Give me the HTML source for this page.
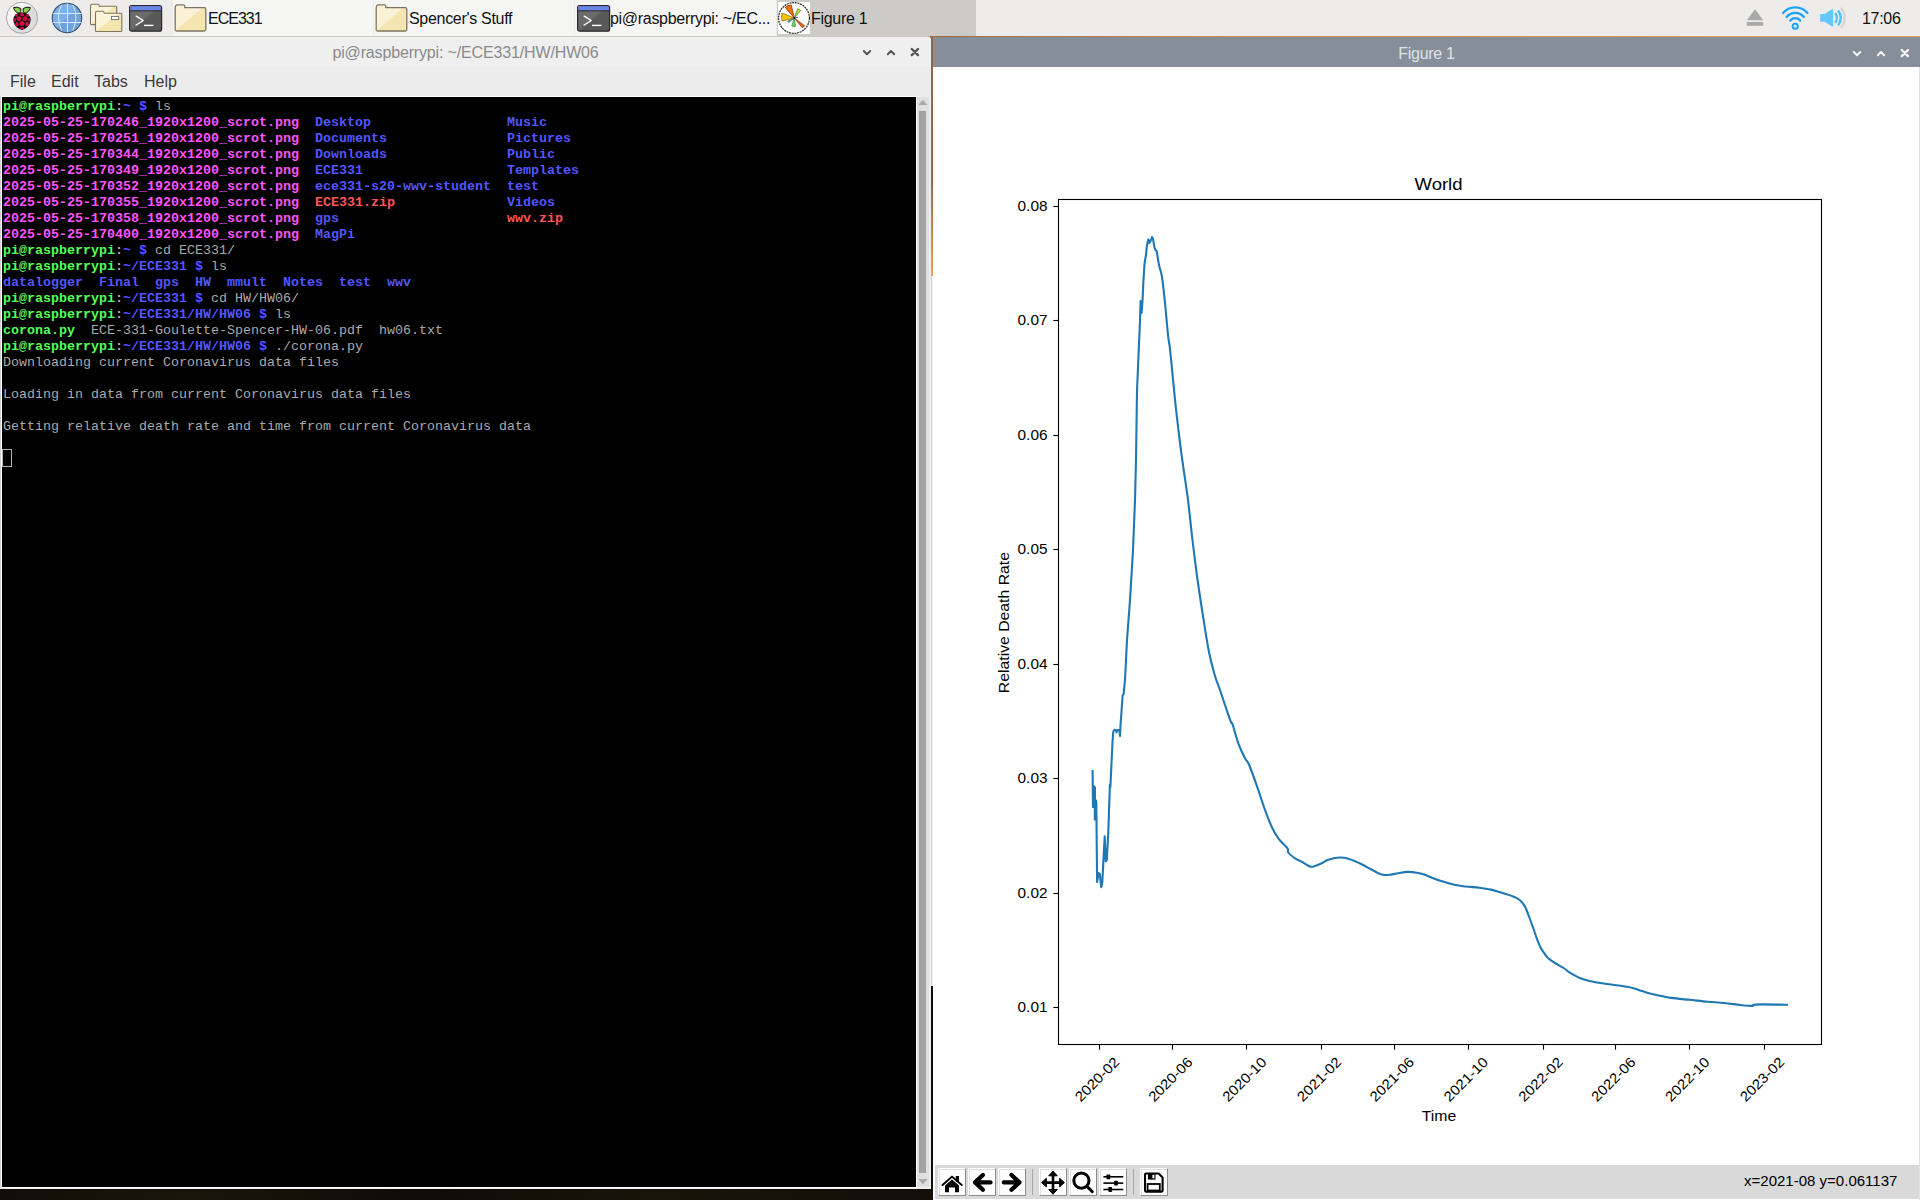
<!DOCTYPE html>
<html><head><meta charset="utf-8">
<style>
*{margin:0;padding:0;box-sizing:border-box}
html,body{width:1920px;height:1200px;overflow:hidden;background:#1a130c;font-family:"Liberation Sans",sans-serif;position:relative}
.abs{position:absolute}
.r{position:absolute}
#taskbar{position:absolute;left:0;top:0;width:1920px;height:36px;background:#edecea}
.tbtn{position:absolute;top:0;height:36px;background:#f5f5f3}
.tbtn.act{background:#cdcbc7;border-radius:0 0 0 0}
.ttext{position:absolute;top:1px;height:36px;line-height:36px;font-size:16px;color:#111;white-space:nowrap;letter-spacing:-0.3px}
#wall{position:absolute;left:0;top:1188px;width:933px;height:12px;background:linear-gradient(90deg,#120d07,#1b140b 20%,#100b06 45%,#1a130a 70%,#130e08)}
#termwin{position:absolute;left:0;top:36px;width:931px;height:1153px;background:#efefef}
#termtitle{position:absolute;left:0;top:36px;width:931px;height:30px;background:#efefef;border-top:1px solid #c9c9c9;color:#8a8a8a;font-size:16px;text-align:center;line-height:30px;padding-top:1px;letter-spacing:-0.15px}
#menubar{position:absolute;left:0;top:66px;width:931px;height:30px;background:#ececec}
.mi{position:absolute;top:67px;height:30px;line-height:30px;font-size:16px;color:#3a3a3a}
#screen{position:absolute;left:2px;top:97px;width:914px;height:1090px;background:#000;font-family:"Liberation Mono",monospace;font-size:13.333px;line-height:16px;color:#aaaaaa;white-space:pre;padding:2px 0 0 1px;overflow:hidden}
#screen .g{color:#55ff55;font-weight:bold}
#screen .b{color:#5555ff;font-weight:bold}
#screen .m{color:#ff55ff;font-weight:bold}
#screen .r{color:#ff5555;font-weight:bold;position:static}
#screen .w{color:#aaaaaa;font-weight:bold}
#fig{position:absolute;left:933px;top:37px;width:987px;height:1163px;background:#fff}
#figtitle{position:absolute;left:933px;top:37px;width:987px;height:30px;background:#868f99;color:#dfe3e6;font-size:16px;text-align:center;line-height:30px;padding-top:2px;letter-spacing:-0.3px}
#toolbar{position:absolute;left:935px;top:1165px;width:984px;height:34px;background:#d9d9d9}
.tb{position:absolute;top:1168px;width:28px;height:28px;background:#fff;border-top:1px solid #fff;border-left:1px solid #fff;border-right:1px solid #8c8c8c;border-bottom:1px solid #8c8c8c;box-shadow:inset 1px 1px 0 #dedede}
.sep{position:absolute;top:1169px;width:1px;height:26px;background:#a8a8a8}
#status{position:absolute;left:1744px;transform-origin:0 50%;transform:scaleX(1.073);top:1164px;height:34px;line-height:34px;font-size:14px;color:#000;white-space:nowrap}
svg text.tk{font-family:"Liberation Sans",sans-serif;font-size:14px;fill:#000}
svg text.ttl{font-family:"Liberation Sans",sans-serif;font-size:17px;fill:#000}
</style></head><body>
<div id="wall"></div>
<div id="taskbar"></div>
<svg class="abs" style="left:4px;top:0px" width="40" height="36" viewBox="4 0 40 36">
<defs><linearGradient id="rg" x1="0" y1="0" x2="1" y2="1"><stop offset="0.45" stop-color="#f4f4f4"/><stop offset="0.55" stop-color="#dcdcdc"/></linearGradient></defs>
<circle cx="22" cy="17.8" r="15.6" fill="url(#rg)" stroke="#a5a5a5" stroke-width="1"/>
<path d="M13.6,7.6 Q17,6.2 20.8,8.5 Q21.5,11.5 19.5,13.3 Q15,12.8 13.6,7.6 Z" fill="#8ccf4d" stroke="#111" stroke-width="1"/>
<path d="M30.4,7.6 Q27,6.2 23.2,8.5 Q22.5,11.5 24.5,13.3 Q29,12.8 30.4,7.6 Z" fill="#8ccf4d" stroke="#111" stroke-width="1"/>
<path d="M22,12.2 Q27.5,12.6 29.6,16 Q31.5,19 30,23 Q28.8,27.5 22,30 Q15.2,27.5 14,23 Q12.5,19 14.4,16 Q16.5,12.6 22,12.2 Z" fill="#111"/>
<g fill="#d9073f">
<ellipse cx="22" cy="14.6" rx="2.3" ry="1.6"/>
<circle cx="19" cy="18.7" r="2.4"/><circle cx="25" cy="18.7" r="2.4"/>
<ellipse cx="14.8" cy="19.8" rx="1.1" ry="1.9"/><ellipse cx="29.2" cy="19.8" rx="1.1" ry="1.9"/>
<circle cx="22" cy="23.6" r="2.5"/>
<ellipse cx="16.9" cy="24.2" rx="1.8" ry="2.1"/><ellipse cx="27.1" cy="24.2" rx="1.8" ry="2.1"/>
<ellipse cx="22" cy="28.3" rx="2.2" ry="1.2"/>
<ellipse cx="16.5" cy="15.5" rx="1.5" ry="1.2"/><ellipse cx="27.5" cy="15.5" rx="1.5" ry="1.2"/>
</g>
</svg>
<svg class="abs" style="left:48px;top:0px" width="40" height="36" viewBox="48 0 40 36">
<defs><linearGradient id="gg" x1="0" y1="0" x2="1" y2="1"><stop offset="0.5" stop-color="#7cb0eb"/><stop offset="0.5" stop-color="#73a2d8"/></linearGradient></defs>
<circle cx="67" cy="17.9" r="14.7" fill="url(#gg)" stroke="#3a5272" stroke-width="1.1"/>
<g stroke="#d8e8fa" stroke-width="1" fill="none">
<line x1="67.5" y1="3.6" x2="67.5" y2="32.2"/>
<line x1="53" y1="13.5" x2="81.5" y2="13.5"/>
<line x1="53" y1="22.5" x2="81.5" y2="22.5"/>
<path d="M61.5,5.2 Q57.8,12 58.5,18 Q58.8,24 61.5,30.5"/>
<path d="M72.8,5.2 Q76.6,12 75.9,18 Q75.6,24 72.8,30.5"/>
</g>
</svg>
<svg class="abs" style="left:86px;top:0px" width="40" height="36" viewBox="86 0 40 36">
<defs><linearGradient id="f2" x1="0" y1="0" x2="1" y2="1"><stop offset="0.48" stop-color="#fbf4d8"/><stop offset="0.52" stop-color="#f4e4ae"/></linearGradient></defs>
<path d="M90.5,6 Q90.5,4.3 92,4.3 L98,4.3 Q99,4.3 99.2,6.3 L115.8,6.3 Q116.7,6.3 116.7,7.3 L116.7,24 Q116.7,24.6 116,24.6 L91.3,24.6 Q90.5,24.6 90.5,23.8 Z" fill="url(#f2)" stroke="#7d7560" stroke-width="1.1"/>
<path d="M95.5,13 Q95.5,11.2 97,11.2 L103,11.2 Q104,11.2 104.3,13.3 L120.9,13.3 Q121.8,13.3 121.8,14.3 L121.8,30.8 Q121.8,31.5 121,31.5 L96.3,31.5 Q95.5,31.5 95.5,30.7 Z" fill="url(#f2)" stroke="#7d7560" stroke-width="1.1"/>
<rect x="111.5" y="16.4" width="7.2" height="3.2" fill="#fff" stroke="#6f6f6f" stroke-width="0.9"/>
</svg>
<svg class="abs" style="left:129px;top:5px" width="34" height="27" viewBox="0 0 34 27">
<defs><linearGradient id="tg129" x1="0" y1="0" x2="1" y2="1"><stop offset="0.45" stop-color="#6b6b6b"/><stop offset="0.55" stop-color="#585858"/></linearGradient></defs>
<rect x="0.6" y="0.6" width="32" height="25.6" rx="2" fill="url(#tg129)" stroke="#2a2a2a" stroke-width="1.2"/>
<rect x="1.2" y="1.2" width="30.8" height="4.4" fill="#6a84ec"/>
<line x1="1" y1="5.8" x2="32.2" y2="5.8" stroke="#2a2a2a" stroke-width="1"/>
<path d="M7.2,11.2 L14.2,15.5 L7.2,20" fill="none" stroke="#fff" stroke-width="1.4" stroke-linecap="round" stroke-linejoin="round"/>
<line x1="15" y1="20.4" x2="24.5" y2="20.4" stroke="#fff" stroke-width="1.4"/>
</svg>
<div class="tbtn" style="left:173px;width:200px"></div><svg class="abs" style="left:174px;top:4px" width="33" height="28" viewBox="0 0 33 28">
<defs><linearGradient id="fg174" x1="0" y1="0" x2="1" y2="1"><stop offset="0.48" stop-color="#faf2d8"/><stop offset="0.52" stop-color="#f4e4b0"/></linearGradient></defs>
<path d="M1.2,4 Q1.2,0.8 3.5,0.8 L9.5,0.8 Q10.8,0.8 10.8,2.6 L10.8,3.6 L30.2,3.6 Q31.8,3.6 31.8,5.2 L31.8,25.5 Q31.8,27 30.2,27 L2.8,27 Q1.2,27 1.2,25.5 Z" fill="url(#fg174)" stroke="#7d7560" stroke-width="1.3"/>
</svg><div class="ttext" style="left:208px;letter-spacing:-1px">ECE331</div>
<div class="tbtn" style="left:374px;width:200px"></div><svg class="abs" style="left:375px;top:4px" width="33" height="28" viewBox="0 0 33 28">
<defs><linearGradient id="fg375" x1="0" y1="0" x2="1" y2="1"><stop offset="0.48" stop-color="#faf2d8"/><stop offset="0.52" stop-color="#f4e4b0"/></linearGradient></defs>
<path d="M1.2,4 Q1.2,0.8 3.5,0.8 L9.5,0.8 Q10.8,0.8 10.8,2.6 L10.8,3.6 L30.2,3.6 Q31.8,3.6 31.8,5.2 L31.8,25.5 Q31.8,27 30.2,27 L2.8,27 Q1.2,27 1.2,25.5 Z" fill="url(#fg375)" stroke="#7d7560" stroke-width="1.3"/>
</svg><div class="ttext" style="left:409px;letter-spacing:-0.3px">Spencer&#x27;s Stuff</div>
<div class="tbtn" style="left:575px;width:201px"></div><svg class="abs" style="left:577px;top:5px" width="34" height="27" viewBox="0 0 34 27">
<defs><linearGradient id="tg577" x1="0" y1="0" x2="1" y2="1"><stop offset="0.45" stop-color="#6b6b6b"/><stop offset="0.55" stop-color="#585858"/></linearGradient></defs>
<rect x="0.6" y="0.6" width="32" height="25.6" rx="2" fill="url(#tg577)" stroke="#2a2a2a" stroke-width="1.2"/>
<rect x="1.2" y="1.2" width="30.8" height="4.4" fill="#6a84ec"/>
<line x1="1" y1="5.8" x2="32.2" y2="5.8" stroke="#2a2a2a" stroke-width="1"/>
<path d="M7.2,11.2 L14.2,15.5 L7.2,20" fill="none" stroke="#fff" stroke-width="1.4" stroke-linecap="round" stroke-linejoin="round"/>
<line x1="15" y1="20.4" x2="24.5" y2="20.4" stroke="#fff" stroke-width="1.4"/>
</svg><div class="ttext" style="left:610px;letter-spacing:-0.3px">pi@raspberrypi: ~/EC...</div>
<div class="tbtn act" style="left:777px;width:199px"></div><svg class="abs" style="left:774px;top:0px" width="40" height="36" viewBox="774 0 40 36">
<rect x="778" y="2" width="32" height="32" fill="#fff"/>
<circle cx="794" cy="18" r="15.4" fill="none" stroke="#2a2a2a" stroke-width="1.2" stroke-dasharray="2 0.7"/>
<g stroke-linejoin="round" stroke-width="0.7">
<path d="M794.3,18 L785.2,7.4 Q787.5,5 791.3,5 Z" fill="#ff6a00" stroke="#6a3010"/>
<path d="M794.3,18 L781.9,13 Q781.3,17 782.1,21 Z" fill="#ffc400" stroke="#806010"/>
<path d="M794.3,18 L797.6,8.8 Q799.3,9 800.7,10.3 Z" fill="#b0e030" stroke="#507020"/>
<path d="M794.3,18 L787.6,21.2 L788.7,22.6 Z" fill="#40a8a0" stroke="#306868"/>
<path d="M794.3,18 L791.8,26 Q793.6,26.8 795.5,26.3 Z" fill="#6ee06e" stroke="#308030"/>
<path d="M794.3,18 L802.3,27.8 Q803.8,27 804.6,25.7 Z" fill="#f06a14" stroke="#703010"/>
</g>
<line x1="794.3" y1="18" x2="797.9" y2="17.4" stroke="#2a4a90" stroke-width="0.9"/>
<circle cx="794.3" cy="18" r="0.9" fill="#111"/>
</svg><div class="ttext" style="left:811px">Figure 1</div>
<svg class="abs" style="left:1740px;top:0px" width="120" height="36" viewBox="1740 0 120 36">
<path d="M1755,9.2 L1763.2,20.2 L1746.8,20.2 Z" fill="#a9a9a9"/>
<rect x="1746.8" y="22" width="16.4" height="3.8" fill="#a9a9a9"/>
<g fill="none" stroke="#17a2fc" stroke-width="2.2" stroke-linecap="round">
<path d="M1783,13 A16,16 0 0 1 1807.5,13"/>
<path d="M1786.6,17 A11,11 0 0 1 1803.9,17"/>
<path d="M1790.2,20.7 A6.2,6.2 0 0 1 1800.3,20.7"/>
</g>
<circle cx="1795.2" cy="26.2" r="2.6" fill="none" stroke="#17a2fc" stroke-width="1.9"/>
<path d="M1820.2,14 L1824.6,14 L1832.4,9 Q1833.1,8.8 1833.1,9.6 L1833.1,26.2 Q1833.1,27 1832.4,26.8 L1824.6,21.8 L1820.2,21.8 Z" fill="#62c8ff"/>
<g fill="none" stroke-width="2.5">
<path d="M1835.05,13.08 A7.35,7.35 0 0 1 1835.05,22.72" stroke="#4cc3ff"/>
<path d="M1837.99,10.52 A11.25,11.25 0 0 1 1837.99,25.28" stroke="#4cc3ff"/>
<path d="M1841.01,7.89 A15.25,15.25 0 0 1 1841.01,27.91" stroke="#d6d6d6"/>
</g>
</svg>
<div class="ttext" style="left:1862px;font-size:16px">17:06</div>

<div id="termwin"></div>
<div id="termtitle">pi@raspberrypi: ~/ECE331/HW/HW06</div>
<div id="menubar"></div>
<div class="mi" style="left:10px">File</div><div class="mi" style="left:51px">Edit</div><div class="mi" style="left:94px">Tabs</div><div class="mi" style="left:144px">Help</div>
<svg class="abs" style="left:850px;top:36px" width="80" height="30" viewBox="850 36 80 30">
<g fill="none" stroke="#555" stroke-width="2" stroke-linecap="round" stroke-linejoin="round">
<path d="M863.8,51 L867,54.2 L870.2,51"/><path d="M887.8,54.2 L891,51 L894.2,54.2"/>
<path d="M911.8,49 L918,55.2 M918,49 L911.8,55.2" stroke-width="2.4"/>
</g></svg>
<div class="abs" style="left:0;top:96px;width:1px;height:1092px;background:#cfcfcf"></div>
<div class="abs" style="left:1px;top:96px;width:916px;height:1092px;background:#fff"></div>
<div id="screen"><span class="g">pi@raspberrypi</span><span class="w">:</span><span class="b">~ $ </span>ls
<span class="m">2025-05-25-170246_1920x1200_scrot.png</span>  <span class="b">Desktop</span>                 <span class="b">Music</span>
<span class="m">2025-05-25-170251_1920x1200_scrot.png</span>  <span class="b">Documents</span>               <span class="b">Pictures</span>
<span class="m">2025-05-25-170344_1920x1200_scrot.png</span>  <span class="b">Downloads</span>               <span class="b">Public</span>
<span class="m">2025-05-25-170349_1920x1200_scrot.png</span>  <span class="b">ECE331</span>                  <span class="b">Templates</span>
<span class="m">2025-05-25-170352_1920x1200_scrot.png</span>  <span class="b">ece331-s20-wwv-student</span>  <span class="b">test</span>
<span class="m">2025-05-25-170355_1920x1200_scrot.png</span>  <span class="r">ECE331.zip</span>              <span class="b">Videos</span>
<span class="m">2025-05-25-170358_1920x1200_scrot.png</span>  <span class="b">gps</span>                     <span class="r">wwv.zip</span>
<span class="m">2025-05-25-170400_1920x1200_scrot.png</span>  <span class="b">MagPi</span>
<span class="g">pi@raspberrypi</span><span class="w">:</span><span class="b">~ $ </span>cd ECE331/
<span class="g">pi@raspberrypi</span><span class="w">:</span><span class="b">~/ECE331 $ </span>ls
<span class="b">datalogger</span>  <span class="b">Final</span>  <span class="b">gps</span>  <span class="b">HW</span>  <span class="b">mmult</span>  <span class="b">Notes</span>  <span class="b">test</span>  <span class="b">wwv</span>
<span class="g">pi@raspberrypi</span><span class="w">:</span><span class="b">~/ECE331 $ </span>cd HW/HW06/
<span class="g">pi@raspberrypi</span><span class="w">:</span><span class="b">~/ECE331/HW/HW06 $ </span>ls
<span class="g">corona.py</span>  ECE-331-Goulette-Spencer-HW-06.pdf  hw06.txt
<span class="g">pi@raspberrypi</span><span class="w">:</span><span class="b">~/ECE331/HW/HW06 $ </span>./corona.py
Downloading current Coronavirus data files

Loading in data from current Coronavirus data files

Getting relative death rate and time from current Coronavirus data</div>
<div class="abs" style="left:2px;top:449px;width:10px;height:18px;border:1px solid #b4b4b4"></div>
<div class="abs" style="left:917px;top:97px;width:12px;height:1090px;background:#e0e0e0"></div>
<svg class="abs" style="left:917px;top:97px" width="12" height="1090" viewBox="917 97 12 1090">
<path d="M918.2,105 L922.9,99.8 L927.6,105 Z" fill="#aaa"/>
<rect x="919" y="111" width="7" height="1062" fill="#a2a2a2"/>
<path d="M918.2,1179 L922.9,1184.3 L927.6,1179 Z" fill="#aaa"/>
</svg>
<div class="abs" style="left:929px;top:66px;width:2px;height:1122px;background:#ececec"></div>

<div class="abs" style="left:931px;top:36px;width:2px;height:240px;background:linear-gradient(#8f6644,#9b6b45 60%,#f0a050)"></div><svg class="abs" style="left:928px;top:35px" width="10" height="8" viewBox="928 35 10 8"><path d="M929,36 L936,36 L933,39.5 L931.5,39.5 Z" fill="#9a6a44"/></svg>
<div class="abs" style="left:931px;top:276px;width:2px;height:710px;background:#f2f2f2;border-left:1px solid #d6d6d6"></div>
<div class="abs" style="left:931px;top:986px;width:2px;height:214px;background:#120d07"></div>
<div class="abs" style="left:930px;top:36px;width:990px;height:1px;background:linear-gradient(90deg,#9a6a44,#c99050 30%,#e0a058)"></div>
<div id="fig"></div>
<div id="figtitle">Figure 1</div>
<svg class="abs" style="left:1850px;top:36px" width="70" height="30" viewBox="1850 36 70 30">
<g fill="none" stroke="#f4f4f4" stroke-width="2" stroke-linecap="round" stroke-linejoin="round">
<path d="M1853.8,52 L1857,55.2 L1860.2,52"/><path d="M1877.8,55.2 L1881,52 L1884.2,55.2"/>
<path d="M1901.8,50 L1908,56.2 M1908,50 L1901.8,56.2" stroke-width="2.4"/>
</g></svg>
<div id="toolbar"></div>
<div class="tb" style="left:938px"></div><div class="tb" style="left:968px"></div><div class="tb" style="left:998px"></div><div class="tb" style="left:1039px"></div><div class="tb" style="left:1069px"></div><div class="tb" style="left:1099px"></div><div class="tb" style="left:1140px"></div>
<div class="sep" style="left:1032px"></div><div class="sep" style="left:1133px"></div>
<svg class="abs" style="left:0;top:0" width="1920" height="1200" viewBox="0 0 1920 1200">
<rect x="955.8" y="1176" width="3.2" height="6" fill="#000"/><path d="M942.5,1185 L952,1176.6 L961.8,1185" fill="none" stroke="#000" stroke-width="1.9" stroke-linecap="round" stroke-linejoin="round"/><path d="M945,1185.5 L952,1179.4 L959,1185.5 L959,1192.3 L955,1192.3 L955,1187.5 L949,1187.5 L949,1192.3 L945,1192.3 Z" fill="#000"/><path d="M982.9,1175 L975,1182.4 L982.9,1189.8 M976,1182.4 L990.5,1182.4" fill="none" stroke="#000" stroke-width="4.3" stroke-linecap="round" stroke-linejoin="round"/><path d="M1011.5,1175 L1019.4,1182.4 L1011.5,1189.8 M1018.4,1182.4 L1003.9,1182.4" fill="none" stroke="#000" stroke-width="4.3" stroke-linecap="round" stroke-linejoin="round"/><path d="M1053,1174 L1053,1191 M1044,1182.6 L1062,1182.6" stroke="#000" stroke-width="2.6"/><path d="M1053,1171 L1057.3,1175.8 L1048.7,1175.8 Z M1053,1194.3 L1057.3,1189.5 L1048.7,1189.5 Z M1041.6,1182.6 L1046.4,1178.3 L1046.4,1186.9 Z M1064.4,1182.6 L1059.6,1178.3 L1059.6,1186.9 Z" fill="#000" stroke="#000" stroke-width="1" stroke-linejoin="round"/><circle cx="1081.4" cy="1180.6" r="7.6" fill="none" stroke="#000" stroke-width="3"/><line x1="1087" y1="1186.4" x2="1092.3" y2="1191.7" stroke="#000" stroke-width="3" stroke-linecap="round"/><g stroke="#000" stroke-width="1.6"><line x1="1103.4" y1="1176.8" x2="1123.3" y2="1176.8"/><line x1="1103.4" y1="1183.1" x2="1123.3" y2="1183.1"/><line x1="1103.4" y1="1189.5" x2="1123.3" y2="1189.5"/></g><g fill="#000"><rect x="1106.5" y="1174.4" width="3.8" height="4.8" rx="0.8"/><rect x="1114.1" y="1180.7" width="3.8" height="4.8" rx="0.8"/><rect x="1108.3" y="1187.1" width="3.8" height="4.8" rx="0.8"/></g><path d="M1146,1173.5 L1158.6,1173.5 L1162.6,1177.6 L1162.6,1190.6 Q1162.6,1191.6 1161.6,1191.6 L1146,1191.6 Q1145,1191.6 1145,1190.6 L1145,1174.5 Q1145,1173.5 1146,1173.5 Z" fill="none" stroke="#000" stroke-width="2.1" stroke-linejoin="round"/><rect x="1148" y="1173.8" width="7.5" height="5.8" fill="#000"/><rect x="1152.4" y="1174.8" width="2" height="3.5" fill="#fff"/><rect x="1147.6" y="1184" width="12.2" height="6.5" fill="none" stroke="#000" stroke-width="1.8"/>
<rect x="1058.5" y="199.5" width="763" height="845" fill="none" stroke="#000" stroke-width="1.1"/>
<line x1="1053.3" y1="206.5" x2="1058.5" y2="206.5" stroke="#000" stroke-width="1.1"/>
<text transform="translate(1047.5,211.4) scale(1.1,1)" text-anchor="end" class="tk">0.08</text>
<line x1="1053.3" y1="320.5" x2="1058.5" y2="320.5" stroke="#000" stroke-width="1.1"/>
<text transform="translate(1047.5,325.4) scale(1.1,1)" text-anchor="end" class="tk">0.07</text>
<line x1="1053.3" y1="435.5" x2="1058.5" y2="435.5" stroke="#000" stroke-width="1.1"/>
<text transform="translate(1047.5,440.4) scale(1.1,1)" text-anchor="end" class="tk">0.06</text>
<line x1="1053.3" y1="549.5" x2="1058.5" y2="549.5" stroke="#000" stroke-width="1.1"/>
<text transform="translate(1047.5,554.4) scale(1.1,1)" text-anchor="end" class="tk">0.05</text>
<line x1="1053.3" y1="664.5" x2="1058.5" y2="664.5" stroke="#000" stroke-width="1.1"/>
<text transform="translate(1047.5,669.4) scale(1.1,1)" text-anchor="end" class="tk">0.04</text>
<line x1="1053.3" y1="778.5" x2="1058.5" y2="778.5" stroke="#000" stroke-width="1.1"/>
<text transform="translate(1047.5,783.4) scale(1.1,1)" text-anchor="end" class="tk">0.03</text>
<line x1="1053.3" y1="893.5" x2="1058.5" y2="893.5" stroke="#000" stroke-width="1.1"/>
<text transform="translate(1047.5,898.4) scale(1.1,1)" text-anchor="end" class="tk">0.02</text>
<line x1="1053.3" y1="1007.5" x2="1058.5" y2="1007.5" stroke="#000" stroke-width="1.1"/>
<text transform="translate(1047.5,1012.4) scale(1.1,1)" text-anchor="end" class="tk">0.01</text>
<line x1="1099.5" y1="1044.5" x2="1099.5" y2="1049.7" stroke="#000" stroke-width="1.1"/>
<text transform="translate(1120.10,1063) rotate(-45) scale(1.085,1)" text-anchor="end" class="tk">2020-02</text>
<line x1="1172.5" y1="1044.5" x2="1172.5" y2="1049.7" stroke="#000" stroke-width="1.1"/>
<text transform="translate(1193.52,1063) rotate(-45) scale(1.085,1)" text-anchor="end" class="tk">2020-06</text>
<line x1="1246.5" y1="1044.5" x2="1246.5" y2="1049.7" stroke="#000" stroke-width="1.1"/>
<text transform="translate(1267.54,1063) rotate(-45) scale(1.085,1)" text-anchor="end" class="tk">2020-10</text>
<line x1="1321.5" y1="1044.5" x2="1321.5" y2="1049.7" stroke="#000" stroke-width="1.1"/>
<text transform="translate(1342.17,1063) rotate(-45) scale(1.085,1)" text-anchor="end" class="tk">2021-02</text>
<line x1="1394.5" y1="1044.5" x2="1394.5" y2="1049.7" stroke="#000" stroke-width="1.1"/>
<text transform="translate(1414.98,1063) rotate(-45) scale(1.085,1)" text-anchor="end" class="tk">2021-06</text>
<line x1="1468.5" y1="1044.5" x2="1468.5" y2="1049.7" stroke="#000" stroke-width="1.1"/>
<text transform="translate(1489.01,1063) rotate(-45) scale(1.085,1)" text-anchor="end" class="tk">2021-10</text>
<line x1="1543.5" y1="1044.5" x2="1543.5" y2="1049.7" stroke="#000" stroke-width="1.1"/>
<text transform="translate(1563.64,1063) rotate(-45) scale(1.085,1)" text-anchor="end" class="tk">2022-02</text>
<line x1="1615.5" y1="1044.5" x2="1615.5" y2="1049.7" stroke="#000" stroke-width="1.1"/>
<text transform="translate(1636.45,1063) rotate(-45) scale(1.085,1)" text-anchor="end" class="tk">2022-06</text>
<line x1="1689.5" y1="1044.5" x2="1689.5" y2="1049.7" stroke="#000" stroke-width="1.1"/>
<text transform="translate(1710.47,1063) rotate(-45) scale(1.085,1)" text-anchor="end" class="tk">2022-10</text>
<line x1="1764.5" y1="1044.5" x2="1764.5" y2="1049.7" stroke="#000" stroke-width="1.1"/>
<text transform="translate(1785.10,1063) rotate(-45) scale(1.085,1)" text-anchor="end" class="tk">2023-02</text>
<path d="M1092.6,771.1 L1093,807.3 L1093.9,786.3 L1095,787.4 L1094.8,819.5 L1095.9,800.3 L1096.3,802 L1097.1,882 L1098.6,873 L1099.8,873.8 L1101.2,887.2 L1102.3,882.5 L1104.7,836.4 L1105.8,861.5 L1106.8,860 L1108.2,834.7 L1109.9,784.5 L1110.4,787 L1111.5,763 L1112.5,742 L1113.3,731.5 L1114.5,729.8 L1116,730.5 L1116.5,732.5 L1117.3,730 L1119.3,730 L1120,736 L1120.6,724 L1121.6,710 L1122.6,696 L1123.6,694 L1125,680 L1127,640 L1130,600 L1133,550 L1135,500 L1136,460 L1137,391 L1138.6,353 L1140,321 L1140.6,301 L1141.6,313 L1142.6,299 L1143.4,281 L1144.6,263 L1146,255 L1147,245 L1148.4,239.4 L1149.4,243 L1150.6,241 L1152,237 L1153,239 L1154.4,247 L1155.4,250 L1156.6,251 C1157.2,253.5 1158.1,260.7 1159,265 C1159.9,269.3 1161.0,270.7 1162,277 C1163.0,283.3 1164.0,293.3 1165,303 C1166.0,312.7 1167.2,327.3 1168,335 C1168.8,342.7 1169.2,341.7 1170,349 C1170.8,356.3 1172.0,369.0 1173,379 C1174.0,389.0 1174.8,398.3 1176,409 C1177.2,419.7 1178.8,433.7 1180,443 C1181.2,452.3 1181.7,455.5 1183,465 C1184.3,474.5 1186.5,488.2 1188,500 C1189.5,511.8 1190.5,523.3 1192,536 C1193.5,548.7 1195.2,562.7 1197,576 C1198.8,589.3 1201.0,603.3 1203,616 C1205.0,628.7 1207.0,642.0 1209,652 C1211.0,662.0 1213.2,669.7 1215,676 C1216.8,682.3 1218.3,685.2 1220,690 C1221.7,694.8 1223.2,699.7 1225,705 C1226.8,710.3 1229.5,718.5 1230.8,721.7 C1232.0,724.9 1231.2,720.6 1232.5,724.2 C1233.8,727.8 1236.2,737.6 1238.3,743.3 C1240.4,749.0 1243.2,754.7 1245,758.3 C1246.8,761.9 1247.0,759.7 1249.2,765 C1251.4,770.3 1255.7,782.5 1258.3,790 C1260.9,797.5 1262.8,803.9 1265,810 C1267.2,816.1 1269.5,822.0 1271.7,826.7 C1273.9,831.4 1275.7,834.7 1278.3,838.3 C1280.9,841.9 1285.8,845.9 1287.5,848.3 C1289.2,850.7 1287.0,850.8 1288.3,852.5 C1289.5,854.2 1292.8,856.8 1295,858.3 C1297.2,859.8 1299.5,860.5 1301.7,861.7 C1303.9,863.0 1306.5,865.0 1308.3,865.8 C1310.1,866.6 1310.3,867.1 1312.5,866.7 C1314.7,866.3 1319.1,864.5 1321.7,863.3 C1324.3,862.1 1325.4,860.7 1328.3,859.7 C1331.2,858.7 1335.9,857.7 1339.2,857.5 C1342.5,857.3 1344.5,857.6 1348.3,858.7 C1352.0,859.8 1358.1,862.5 1361.7,864.2 C1365.3,865.9 1367.2,867.3 1370,868.8 C1372.8,870.3 1375.9,872.2 1378.3,873.2 C1380.7,874.2 1382.5,874.8 1384.6,875 C1386.7,875.2 1388.5,874.9 1390.8,874.6 C1393.0,874.3 1395.3,873.7 1398.1,873.2 C1400.9,872.8 1404.4,872.0 1407.5,871.9 C1410.6,871.8 1414.1,872.2 1416.9,872.7 C1419.7,873.2 1421.6,873.7 1424.2,874.6 C1426.8,875.5 1429.4,876.7 1432.5,877.9 C1435.6,879.1 1439.1,880.4 1442.9,881.6 C1446.7,882.8 1451.6,884.2 1455.4,885 C1459.2,885.8 1461.8,886.0 1465.8,886.5 C1469.8,887.0 1475.4,887.3 1479.4,887.8 C1483.4,888.3 1486.3,888.6 1489.8,889.4 C1493.3,890.1 1496.2,891.1 1500.2,892.3 C1504.2,893.5 1510.5,895.4 1513.75,896.7 C1517.0,898.0 1518.1,898.6 1520,900.3 C1521.9,902.0 1523.6,904.2 1525.2,907.1 C1526.8,910.0 1528.0,913.8 1529.4,917.5 C1530.8,921.2 1532.5,926.0 1533.75,929.5 C1535.0,933.0 1535.6,935.3 1536.7,938.2 C1537.8,941.1 1539.1,944.6 1540.3,947 C1541.5,949.4 1542.7,950.9 1544,952.8 C1545.3,954.7 1546.4,956.5 1548.3,958.3 C1550.2,960.1 1552.9,961.7 1555.6,963.4 C1558.3,965.1 1562.0,966.9 1564.4,968.5 C1566.8,970.1 1567.5,971.3 1570.2,972.9 C1572.9,974.5 1577.0,976.9 1580.4,978.3 C1583.8,979.7 1586.5,980.4 1590.6,981.3 C1594.7,982.2 1599.1,982.9 1605.2,983.8 C1611.3,984.7 1621.6,985.7 1627.1,986.7 C1632.6,987.7 1634.3,988.6 1638,989.7 C1641.7,990.8 1645.3,992.3 1649,993.3 C1652.7,994.3 1656.3,994.9 1660,995.7 C1663.7,996.5 1666.0,997.2 1670.9,997.9 C1675.8,998.6 1683.1,999.2 1689.2,999.8 C1695.3,1000.4 1701.6,1001.2 1707.4,1001.7 C1713.2,1002.2 1718.7,1002.5 1724.2,1003 C1729.7,1003.5 1735.5,1004.5 1740.2,1005 C1744.9,1005.5 1750.3,1005.9 1752.6,1005.9 C1754.8,1005.9 1752.1,1005.0 1753.7,1004.8 C1755.3,1004.5 1756.6,1004.4 1762.1,1004.4 C1767.6,1004.4 1782.8,1004.7 1786.9,1004.8" fill="none" stroke="#1f77b4" stroke-width="2.1" stroke-linejoin="round" stroke-linecap="square"/>
<text transform="translate(1438.5,189.7) scale(1.09,1)" text-anchor="middle" class="ttl">World</text>
<text transform="translate(1439,1120.8) scale(1.13,1)" text-anchor="middle" class="tk">Time</text>
<text transform="translate(1008.5,622.6) rotate(-90) scale(1.128,1)" text-anchor="middle" class="tk">Relative Death Rate</text>
</svg>
<div class="abs" style="left:1919px;top:67px;width:1px;height:1133px;background:#e2e2e2"></div>
<div id="status">x=2021-08 y=0.061137</div>
</body></html>
